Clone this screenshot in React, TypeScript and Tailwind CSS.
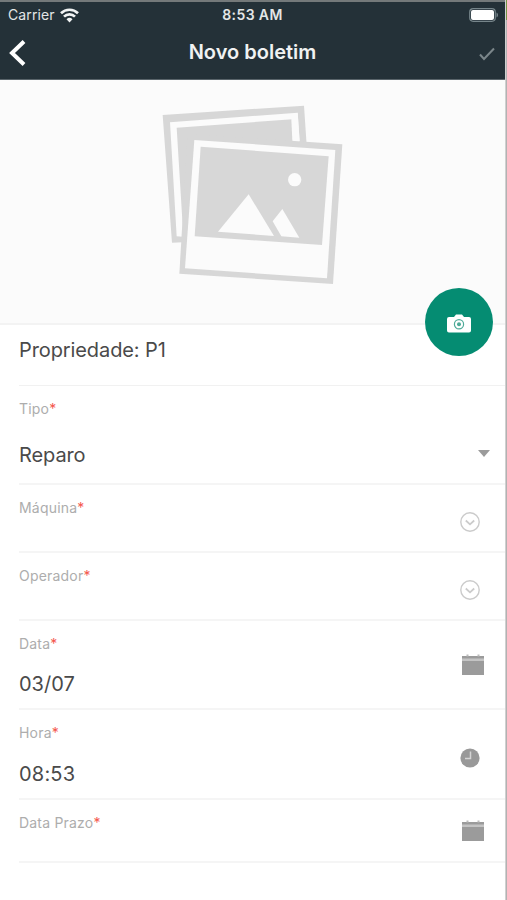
import React from 'react';
import clsx from 'clsx';

type FieldProps = {
    label: string;
    value?: string;
    className: string;
    valueClassName?: string;
    children?: React.ReactNode;
};

const Field: React.FC<FieldProps> = ({ label, value, className, valueClassName, children }) => (
    <div className={clsx('ml-[19px] flex justify-between border-b-2 border-[#f5f5f5]', className)}>
        <div className="pt-[14px]">
            <div className="text-[14px] leading-[18px] tracking-[0.2px] text-[#adadad]">
                {label}
                <span className="text-[#f4574d]">*</span>
            </div>
            {value && (
                <div className={clsx('text-[20px] leading-6 text-[#4a4a4a]', valueClassName)}>{value}</div>
            )}
        </div>
        {children}
    </div>
);

const CalendarIcon = ({ className }: { className: string }) => (
    <svg className={clsx('mr-[21px] h-[22px] w-[22px]', className)} viewBox="0 0 22 22">
        <path d="M0 2h22v19H0z" fill="#9b9b9b" />
        <path d="M0 4.5h22V7H0z" fill="#c4c4c4" />
        <path d="M4.5 .5h2v2h-2zM15.5 .5h2v2h-2z" fill="#bcbcbc" />
    </svg>
);

const CircleChevron = ({ className }: { className: string }) => (
    <svg className={clsx('mr-[25px] h-5 w-5', className)} viewBox="0 0 20 20" fill="none" stroke="#cbcbcb" strokeWidth="1.4">
        <circle cx="10" cy="10" r="9.2" />
        <path d="M5.8 8.5l4.2 3.8 4.2-3.8" strokeWidth="1.8" />
    </svg>
);

const StatusBar = () => (
    <div className="grid h-[26px] grid-cols-3 items-center text-[14px] leading-4 text-[#e3e6e7]">
        <div className="flex items-center gap-[5px] pl-2">
            <span className="tracking-[0.1px]">Carrier</span>
            <svg className="h-[15px] w-[19px]" viewBox="0 0 19 15" fill="none" stroke="#f2f4f4" strokeWidth="2.7">
                <path d="M1 5.2a12.2 12.2 0 0 1 17 0" />
                <path d="M4 8.6a7.8 7.8 0 0 1 11 0" />
                <path d="M9.5 14.4l-3-3.2a4.4 4.4 0 0 1 6 0z" fill="#f2f4f4" stroke="none" />
            </svg>
        </div>
        <span className="text-center text-[14px] font-semibold tracking-[0.4px]">8:53 AM</span>
        <div className="flex justify-end pr-[6px]">
            <svg className="h-[14px] w-[30px]" viewBox="0 0 30 14">
                <rect x="0.7" y="0.7" width="25.6" height="12.6" rx="3.5" fill="none" stroke="#76858a" strokeWidth="1.2" />
                <rect x="2" y="2" width="23" height="10" rx="2" fill="#fff" />
                <path d="M27.5 4.5c2 .8 2 4.2 0 5z" fill="#76858a" />
            </svg>
        </div>
    </div>
);

const PhotoPlaceholder = () => (
    <svg className="ml-[150px] mt-[15px] h-[200px] w-[205px]" viewBox="0 0 615 600">
        <path d="M38 60L462 32L470 150L130 150L98 442L66 443Z" fill="#d7d7d7" />
        <path d="M60 82L443 53L449 145L130 145L98 425L80 424Z" fill="#fbfbfb" />
        <path d="M80 98L427 73L431 150L130 150L100 424Z" fill="#d7d7d7" />
        <path d="M113 116L577 148L549 567L88 536Z" fill="#d7d7d7" />
        <path d="M443 53L449 138L427 137L424 73Z" fill="#fbfbfb" />
        <path d="M133 135L556 165L531 550L105 520Z" fill="#fbfbfb" />
        <path d="M152 155L536 184L516 450L134 424Z" fill="#d7d7d7" />
        <circle cx="434" cy="254" r="20" fill="#fbfbfb" />
        <path d="M296 298L372 423L204 410Z" fill="#fbfbfb" />
        <path d="M397 342L448 428L394 424L368 379Z" fill="#fbfbfb" />
    </svg>
);

export default function App() {
    return (
        <div className="flex h-[900px] w-[507px] bg-white font-[Inter,sans-serif]">
            <main className="flex w-[505px] flex-col">
                <header className="h-20 border-b border-t-2 border-b-[#59646a] border-t-[#74797a] bg-[#243138]">
                    <StatusBar />
                    <div className="grid grid-cols-[40px_1fr_40px] items-center">
                        <svg className="ml-[9px] mt-[2px] h-[26px] w-[17px]" viewBox="0 0 17 26" fill="none" stroke="#fff" strokeWidth="4">
                            <path d="M15 1.5L3 13l12 11.5" />
                        </svg>
                        <h1 className="pt-px text-center text-[20px] font-semibold leading-[46px] text-[#f0f2f2]">Novo boletim</h1>
                        <svg className="ml-[14px] mt-[5px] h-[14px] w-4" viewBox="0 0 16 14" fill="none" stroke="#7b868a" strokeWidth="2">
                            <path d="M1 7.5l4 4.5L15 1.5" />
                        </svg>
                    </div>
                </header>

                <section className="relative h-[245px] border-b-2 border-[#f3f3f3] bg-[#fbfbfb]">
                    <PhotoPlaceholder />
                    <button className="absolute left-[425px] top-[208px] flex h-[68px] w-[68px] items-center justify-center rounded-full bg-[#058c72]">
                        <svg className="mt-[2px] h-[19px] w-6" viewBox="0 0 24 19">
                            <path d="M2 3h5l2-2.5h6L17 3h5a2 2 0 0 1 2 2v11.5a2 2 0 0 1-2 2H2a2 2 0 0 1-2-2V5a2 2 0 0 1 2-2z" fill="#fff" />
                            <circle cx="12" cy="10.3" r="4.6" fill="none" stroke="#4daa98" strokeWidth="1.2" />
                            <circle cx="12" cy="10.3" r="2" fill="#4daa98" />
                        </svg>
                    </button>
                </section>

                <div className="ml-[19px] h-[61px] border-b border-[#f1f1f1] pt-[13px] text-[20px] leading-6 tracking-[-0.1px] text-[#4a4a4a]">
                    Propriedade: P1
                </div>
                <Field label="Tipo" value="Reparo" className="h-[99px]" valueClassName="mt-[25px] tracking-[-0.1px]">
                    <svg className="mr-[15px] mt-[64px] h-[7px] w-3" viewBox="0 0 12 7">
                        <path d="M0 0h12L6 7z" fill="#9b9b9b" />
                    </svg>
                </Field>
                <Field label="Máquina" className="h-[68px]">
                    <CircleChevron className="mt-[27px]" />
                </Field>
                <Field label="Operador" className="h-[68px]">
                    <CircleChevron className="mt-[27px]" />
                </Field>
                <Field label="Data" value="03/07" className="h-[89px]" valueClassName="mt-[19px]">
                    <CalendarIcon className="mt-[33px]" />
                </Field>
                <Field label="Hora" value="08:53" className="h-[90px]" valueClassName="mt-[20px] tracking-[0.2px]">
                    <svg className="mr-[25px] mt-[38px] h-5 w-5" viewBox="0 0 20 20">
                        <circle cx="10" cy="10" r="9.6" fill="#999" />
                        <path d="M10.5 3.5v7H5" fill="none" stroke="#d5d5d5" strokeWidth="1.5" />
                    </svg>
                </Field>
                <Field label="Data Prazo" className="h-[63px]">
                    <CalendarIcon className="mt-[20px]" />
                </Field>
            </main>
            <aside className="w-[2px] border-l border-[#d0d0d0] bg-[#b2b2b2]">
                <div className="h-5 bg-[#759344]" />
            </aside>
        </div>
    );
}
